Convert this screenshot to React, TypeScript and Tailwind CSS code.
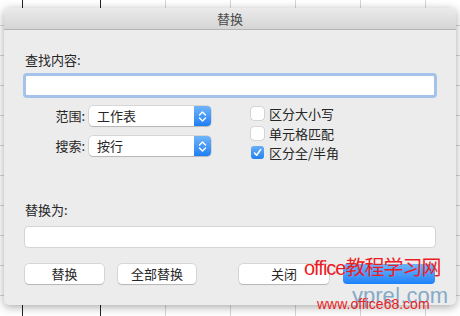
import React from 'react';

const font = { fontFamily: '"Noto Sans CJK SC", "Liberation Sans", sans-serif' };

const Stepper: React.FC = () => (
  <div className="w-[17px] h-full rounded-r-[4px] bg-gradient-to-b from-[#6fb4f8] to-[#1c7ff3] flex items-center justify-center">
    <svg width="9" height="13" viewBox="0 0 9 13" fill="none" stroke="white" strokeWidth="1.4" strokeLinecap="round" strokeLinejoin="round">
      <path d="M1.5 5 L4.5 2 L7.5 5" />
      <path d="M1.5 8 L4.5 11 L7.5 8" />
    </svg>
  </div>
);

const Popup: React.FC<{ label: string; value: string }> = ({ label, value }) => (
  <div className="flex items-center h-[20px]">
    <span className="w-[37px] text-right pr-[4px] text-[13px] text-[#262626]">{label}</span>
    <div className="w-[122px] h-[20px] flex bg-white rounded-[4px] shadow-[0_0_0_0.5px_rgba(0,0,0,0.18),0_1px_1px_rgba(0,0,0,0.15)]">
      <span className="flex-1 pl-[8px] text-[13px] leading-[20px] text-[#262626]">{value}</span>
      <Stepper />
    </div>
  </div>
);

const Check: React.FC<{ label: string; checked?: boolean }> = ({ label, checked }) => (
  <div className="flex items-center h-[19.5px] gap-[5px]">
    {checked ? (
      <div className="w-[13px] h-[13px] rounded-[3px] bg-gradient-to-b from-[#67aef6] to-[#1f80f0] flex items-center justify-center">
        <svg width="9" height="9" viewBox="0 0 9 9" fill="none" stroke="white" strokeWidth="1.6" strokeLinecap="round" strokeLinejoin="round">
          <path d="M1.5 5 L3.6 7.2 L7.6 1.6" />
        </svg>
      </div>
    ) : (
      <div className="w-[13px] h-[13px] rounded-[3px] bg-white shadow-[0_0_0_0.5px_rgba(0,0,0,0.2)]" />
    )}
    <span className="text-[13px] text-[#262626]">{label}</span>
  </div>
);

const Btn: React.FC<{ w: string; children?: React.ReactNode }> = ({ w, children }) => (
  <div className={`${w} h-[20px] bg-white rounded-[4px] shadow-[0_0_0_0.5px_rgba(0,0,0,0.18),0_1px_1px_rgba(0,0,0,0.15)] text-center text-[13px] leading-[20px] text-[#262626]`}>
    {children}
  </div>
);

export default function App() {
  const cols = [23, 78, 65, 65, 65, 65, 65, 65];
  return (
    <div className="relative w-[460px] h-[316px] overflow-hidden bg-white" style={font}>
      {/* spreadsheet behind */}
      <div className="absolute inset-0 flex">
        {cols.map((w, i) => (
          <div
            key={i}
            className={i < 2 ? 'h-full border-r border-[#222] shrink-0' : 'h-full border-r border-[#d6d6d6] shrink-0'}
            style={{ width: w }}
          />
        ))}
      </div>
      <div className="absolute inset-0 flex flex-col pt-[25px]">
        {Array.from({ length: 10 }).map((_, i) => (
          <div key={i} className="h-[30px] border-t border-[#d6d6d6] shrink-0" />
        ))}
      </div>

      {/* dialog */}
      <div className="absolute left-[4px] top-[8px] w-[452px] h-[297px] rounded-[5px] overflow-hidden bg-[#ececec] shadow-[0_2px_10px_rgba(0,0,0,0.35)] flex flex-col">
        <div className="h-[22px] shrink-0 bg-gradient-to-b from-[#ebebeb] to-[#d5d5d5] border-b border-[#b4b4b4] text-center text-[13px] leading-[22px] text-[#4a4a4a]">
          替换
        </div>

        <div className="pl-[21px] mt-[21px] text-[13px] leading-[18px] text-[#262626]">查找内容:</div>

        <div className="ml-[19px] mt-[4px] w-[414px] h-[25px] rounded-[4px] bg-white border-[3px] border-[#a3c3ea]" />

        <div className="flex mt-[8px] ml-[48px]">
          <div className="flex flex-col gap-[10px]">
            <Popup label="范围:" value="工作表" />
            <Popup label="搜索:" value="按行" />
          </div>
          <div className="flex flex-col ml-[40px] -mt-[2px]">
            <Check label="区分大小写" />
            <Check label="单元格匹配" />
            <Check label="区分全/半角" checked />
          </div>
        </div>

        <div className="pl-[21px] mt-[38px] text-[13px] leading-[18px] text-[#262626]">替换为:</div>

        <div className="ml-[21px] mt-[8px] w-[410px] h-[20px] rounded-[3px] bg-white shadow-[0_0_0_0.5px_rgba(0,0,0,0.2)]" />

        <div className="flex ml-[21px] mt-[17px]">
          <Btn w="w-[79px]">替换</Btn>
          <div className="w-[14px]" />
          <Btn w="w-[78px]">全部替换</Btn>
          <div className="w-[43px]" />
          <Btn w="w-[90px]">关闭</Btn>
          <div className="w-[14px]" />
          <div className="w-[92px] h-[20px] rounded-[4px] bg-gradient-to-b from-[#6cb3fa] to-[#1a82fb]" />
        </div>
      </div>

      {/* watermarks */}
      <div className="absolute left-[352px] top-[284px] text-[22px] leading-[24px] text-[#5a8fb8] opacity-70 whitespace-nowrap" style={{ fontFamily: '"Liberation Sans", sans-serif' }}>
        ypre|.com
      </div>
      <div className="absolute left-[304px] top-[254px] text-[20px] leading-[26px] tracking-[-1px] text-[#ec1c24] whitespace-nowrap">
        <span style={{ fontFamily: '"Liberation Sans", sans-serif' }}>office</span>教程学习网
      </div>
      <div className="absolute left-[317px] top-[296px] text-[14px] leading-[16px] text-[#ec1c24] whitespace-nowrap" style={{ fontFamily: '"Liberation Sans", sans-serif' }}>
        www.office68.com
      </div>
    </div>
  );
}
